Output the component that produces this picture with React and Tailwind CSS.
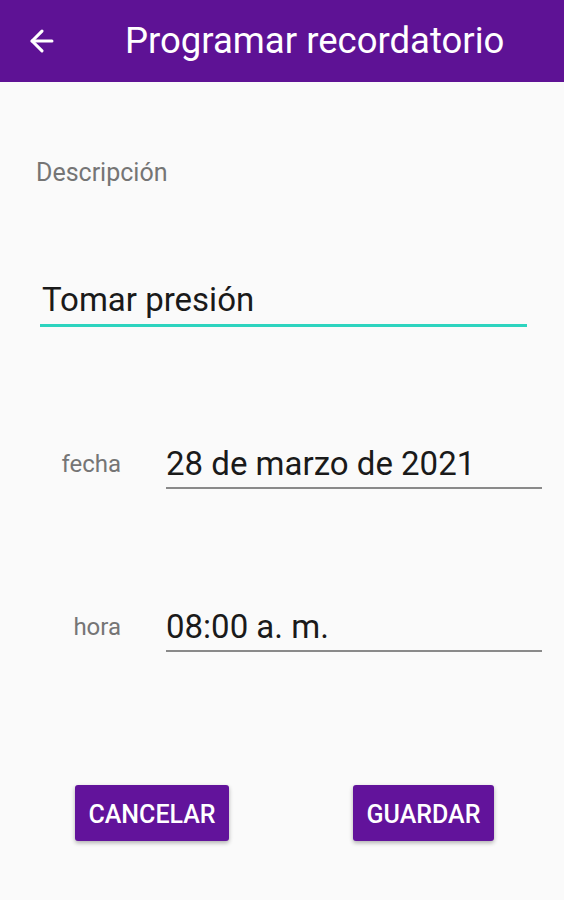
import { ArrowLeft } from "lucide-react";

function DateField({ label, value }) {
    return (
        <div className="flex items-start">
            <div className="w-[121px] shrink-0 text-right text-[24px] leading-[34px] text-[#757575]">
                {label}
            </div>
            <div className="ml-[45px] mr-[22px] flex-1 border-b-2 border-[#8a8a8a] pb-[6px]">
                <p className="text-[33px] leading-[34px] text-[#1a1a1a]">{value}</p>
            </div>
        </div>
    );
}

export default function App() {
    return (
        <main className="min-h-[900px] bg-[#fafafa] font-['Roboto',sans-serif]">
            <header className="h-[82px] bg-[#5e1295] flex items-center text-white">
                <button className="ml-[25px] w-[34px] h-[34px] flex items-center justify-center">
                    <ArrowLeft size={34} strokeWidth={2.2} />
                </button>
                <h1 className="ml-[66px] text-[36.5px] leading-none">Programar recordatorio</h1>
            </header>

            <section className="pt-[78px]">
                <p className="ml-[36px] text-[25px] leading-[26px] text-[#757575]">
                    Descripción
                </p>

                <div className="mt-[97px] ml-[40px] mr-[37px] border-b-[3px] border-[#2dd4bf] pb-[7px] pl-[2px]">
                    <p className="text-[33px] leading-[34px] text-[#1a1a1a]">Tomar presión</p>
                </div>

                <div className="mt-[120px]">
                    <DateField label="fecha" value="28 de marzo de 2021" />
                </div>

                <div className="mt-[121px]">
                    <DateField label="hora" value="08:00 a. m." />
                </div>

                <div className="mt-[133px] flex">
                    <button className="ml-[75px] h-[56px] w-[154px] pt-[3px] rounded-[3px] bg-[#62139b] text-white text-[25px] font-medium shadow-[0_2px_4px_rgba(0,0,0,0.3)]">
                        CANCELAR
                    </button>
                    <button className="ml-[124px] h-[56px] w-[141px] pt-[3px] rounded-[3px] bg-[#62139b] text-white text-[25px] font-medium shadow-[0_2px_4px_rgba(0,0,0,0.3)]">
                        GUARDAR
                    </button>
                </div>
            </section>
        </main>
    );
}
